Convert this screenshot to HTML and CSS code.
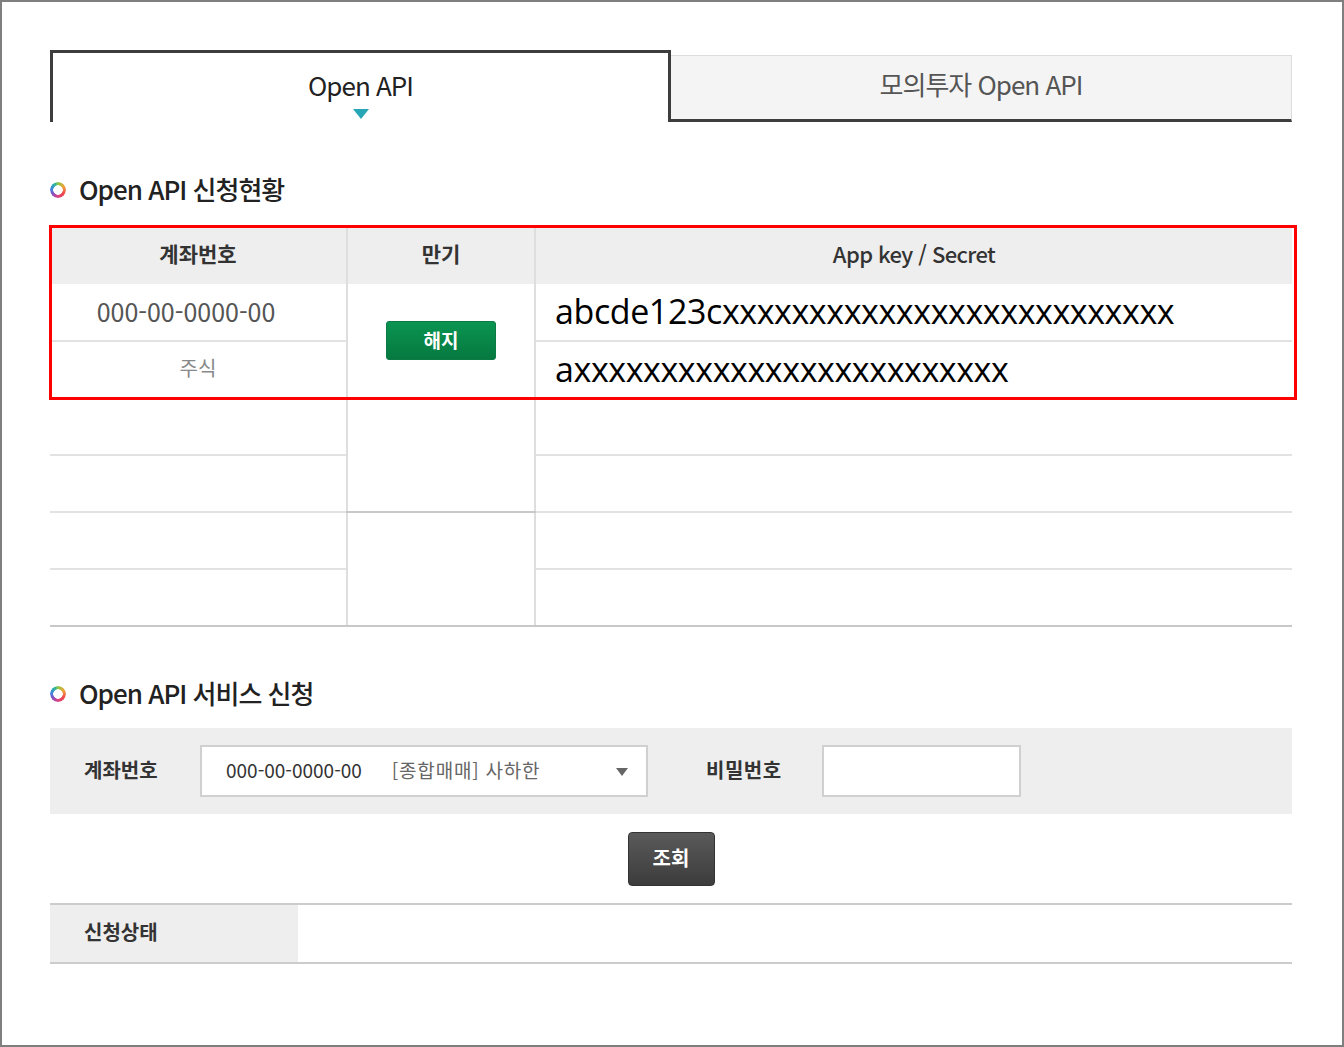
FILE: index.html
```html
<!DOCTYPE html>
<html lang="ko">
<head>
<meta charset="utf-8">
<title>Open API</title>
<link rel="stylesheet" href="styles.css">
</head>
<body>
<div class="frame">
  <div class="content">
    <div class="tabs">
      <div class="tab tab-active">
        <span class="tab-label">Open API</span>
        <span class="tab-caret"></span>
      </div>
      <div class="tab tab-idle">
        <span class="tab-label">모의투자 Open API</span>
      </div>
    </div>

    <h2 class="sec-title sec-title-first"><span class="ring"></span>Open API 신청현황</h2>

    <div class="grid-wrap">
      <table class="status">
        <colgroup>
          <col class="c1"><col class="c2"><col class="c3">
        </colgroup>
        <thead>
          <tr><th>계좌번호</th><th>만기</th><th class="th-key">App key / Secret</th></tr>
        </thead>
        <tbody>
          <tr>
            <td class="acct">000-00-0000-00</td>
            <td rowspan="2" class="mid"><button class="btn-green">해지</button></td>
            <td class="key">abcde123cxxxxxxxxxxxxxxxxxxxxxxxxxx</td>
          </tr>
          <tr>
            <td class="kind">주식</td>
            <td class="key">axxxxxxxxxxxxxxxxxxxxxxxxx</td>
          </tr>
          <tr><td></td><td rowspan="2" class="mid"></td><td></td></tr>
          <tr><td></td><td></td></tr>
          <tr><td></td><td rowspan="2" class="mid"></td><td></td></tr>
          <tr class="last"><td></td><td></td></tr>
        </tbody>
      </table>
      <div class="highlight"></div>
    </div>

    <h2 class="sec-title sec-title-second"><span class="ring"></span>Open API 서비스 신청</h2>

    <div class="form-box">
      <span class="form-label">계좌번호</span>
      <div class="select">
        <span class="sel-num">000-00-0000-00</span>
        <span class="sel-name">[종합매매] 사하한</span>
        <span class="sel-arrow"></span>
      </div>
      <span class="form-label form-label-pw">비밀번호</span>
      <div class="pw-input"></div>
    </div>

    <div class="btn-row"><button class="btn-dark">조회</button></div>

    <div class="state-row">
      <div class="state-label">신청상태</div>
      <div class="state-value"></div>
    </div>
  </div>
</div>
</body>
</html>
```

FILE: styles.css
```css
* { box-sizing: border-box; }
html, body { margin: 0; padding: 0; background: #fff; }
body {
  font-family: "Noto Sans CJK KR", "Noto Sans", sans-serif;
  color: #333;
}
.frame {
  width: 1344px;
  height: 1047px;
  border: 2px solid #7f7f7f;
  overflow: hidden;
}
.content {
  margin-left: 48px;
  width: 1242px;
  padding-top: 48px;
}

/* tabs */
.tabs {
  display: flex;
  align-items: flex-end;
  height: 72px;
}
.tab {
  display: flex;
  flex-direction: column;
  align-items: center;
}
.tab-label {
  font-size: 26px;
  letter-spacing: -1px;
  line-height: 30px;
}
.tab-active {
  width: 621px;
  height: 72px;
  border: 3px solid #3d3d3d;
  border-bottom: none;
  padding-top: 17px;
  color: #222;
}
.tab-caret {
  margin-top: 9px;
  width: 0;
  height: 0;
  border-left: 8px solid transparent;
  border-right: 8px solid transparent;
  border-top: 10px solid #27a7b6;
}
.tab-idle {
  flex: 1;
  height: 67px;
  background: #f4f4f4;
  border-top: 1px solid #dcdcdc;
  border-right: 1px solid #dcdcdc;
  border-bottom: 3px solid #3d3d3d;
  padding-top: 13px;
  color: #555;
}

/* section title */
.sec-title {
  display: flex;
  align-items: center;
  gap: 13px;
  margin: 0;
  height: 30px;
  padding-bottom: 4px;
  font-size: 26px;
  font-weight: 500;
  letter-spacing: -1px;
  color: #222;
}
.sec-title-first { margin-top: 53px; margin-bottom: 22px; }
.sec-title-second { margin-top: 52px; margin-bottom: 20px; }
.ring {
  width: 16px;
  height: 16px;
  margin-top: 4px;
  border-radius: 50%;
  background: conic-gradient(#8dc63f 0deg, #f2a23a 60deg, #ef4c4c 120deg, #e0407c 180deg, #8a4fc4 230deg, #3d86dc 280deg, #2ab6a2 330deg, #8dc63f 360deg);
  -webkit-mask: radial-gradient(circle, transparent 4.5px, #000 5px);
  mask: radial-gradient(circle, transparent 4.5px, #000 5px);
  flex: none;
}

/* status table */
.grid-wrap { position: relative; }
.status {
  width: 1242px;
  border-collapse: collapse;
  table-layout: fixed;
}
.c1 { width: 297px; }
.c2 { width: 188px; }
.c3 { width: 757px; }
.status th {
  height: 57px;
  background: #eeeeee;
  font-size: 21px;
  font-weight: 700;
  color: #333;
  border-left: 2px solid #dedede;
  padding: 0 0 5px 0;
}
.status th:first-child { border-left: none; }
.status th.th-key {
  font-weight: 500;
  font-size: 22px;
  letter-spacing: -0.6px;
}
.status td {
  height: 57px;
  padding: 0;
  border-top: 2px solid #e2e2e2;
  border-left: 2px solid #dedede;
  text-align: center;
}
.status td:first-child { border-left: none; }
.status tbody tr:first-child td { border-top: none; }
.status tr.last td { border-bottom: 2px solid #c8c8c8; }
.status td.mid { border-bottom: 2px solid #c8c8c8; }
.status td.acct {
  font-size: 25px;
  color: #555;
  padding-right: 24px;
  padding-bottom: 2px;
}
.status td.kind {
  font-size: 20px;
  color: #888;
  padding-bottom: 5px;
}
.status td.key {
  text-align: left;
  padding-left: 19px;
  padding-bottom: 2px;
  font-family: "Open Sans", "Noto Sans", sans-serif;
  font-size: 34px;
  color: #000;
  letter-spacing: -0.4px;
  white-space: nowrap;
}
.btn-green {
  width: 110px;
  height: 39px;
  border: 1px solid #0b7a45;
  border-radius: 3px;
  background: linear-gradient(#0a9452, #06793f);
  color: #fff;
  font-family: inherit;
  font-size: 19px;
  font-weight: 700;
  padding: 0 0 3px 0;
}
.highlight {
  position: absolute;
  left: -1px;
  top: -2px;
  width: 1248px;
  height: 175px;
  border: 3px solid #ff0000;
  pointer-events: none;
}

/* form */
.form-box {
  display: flex;
  align-items: center;
  height: 86px;
  margin-top: -1px;
  background: #eeeeee;
  padding-left: 34px;
}
.form-label {
  width: 116px;
  font-size: 20px;
  font-weight: 700;
  color: #333;
  padding-bottom: 4px;
}
.form-label-pw {
  width: auto;
  margin-left: 58px;
  margin-right: 40px;
  letter-spacing: 0.5px;
}
.select {
  position: relative;
  display: flex;
  align-items: center;
  width: 448px;
  height: 52px;
  background: #fff;
  border: 2px solid #d0d0d0;
  padding-left: 24px;
  padding-bottom: 3px;
  font-size: 19px;
}
.sel-num { color: #333; }
.sel-name { color: #666; margin-left: 30px; letter-spacing: 0.8px; }
.sel-arrow {
  position: absolute;
  right: 18px;
  top: 21px;
  border-left: 6px solid transparent;
  border-right: 6px solid transparent;
  border-top: 8px solid #666;
}
.pw-input {
  width: 199px;
  height: 52px;
  background: #fff;
  border: 2px solid #d0d0d0;
}
.btn-row {
  display: flex;
  justify-content: center;
  margin-top: 18px;
}
.btn-dark {
  width: 87px;
  height: 54px;
  border: 1px solid #333;
  border-radius: 4px;
  background: linear-gradient(#5a5a5a, #3c3c3c);
  color: #fff;
  font-family: inherit;
  font-size: 20px;
  font-weight: 700;
  padding: 0 0 4px 0;
}
.state-row {
  display: flex;
  margin-top: 17px;
  height: 61px;
  border-top: 2px solid #cccccc;
  border-bottom: 2px solid #cccccc;
}
.state-label {
  width: 248px;
  background: #eeeeee;
  display: flex;
  align-items: center;
  padding-left: 34px;
  padding-bottom: 5px;
  font-size: 20px;
  font-weight: 700;
  color: #333;
}
.state-value { flex: 1; }
```
